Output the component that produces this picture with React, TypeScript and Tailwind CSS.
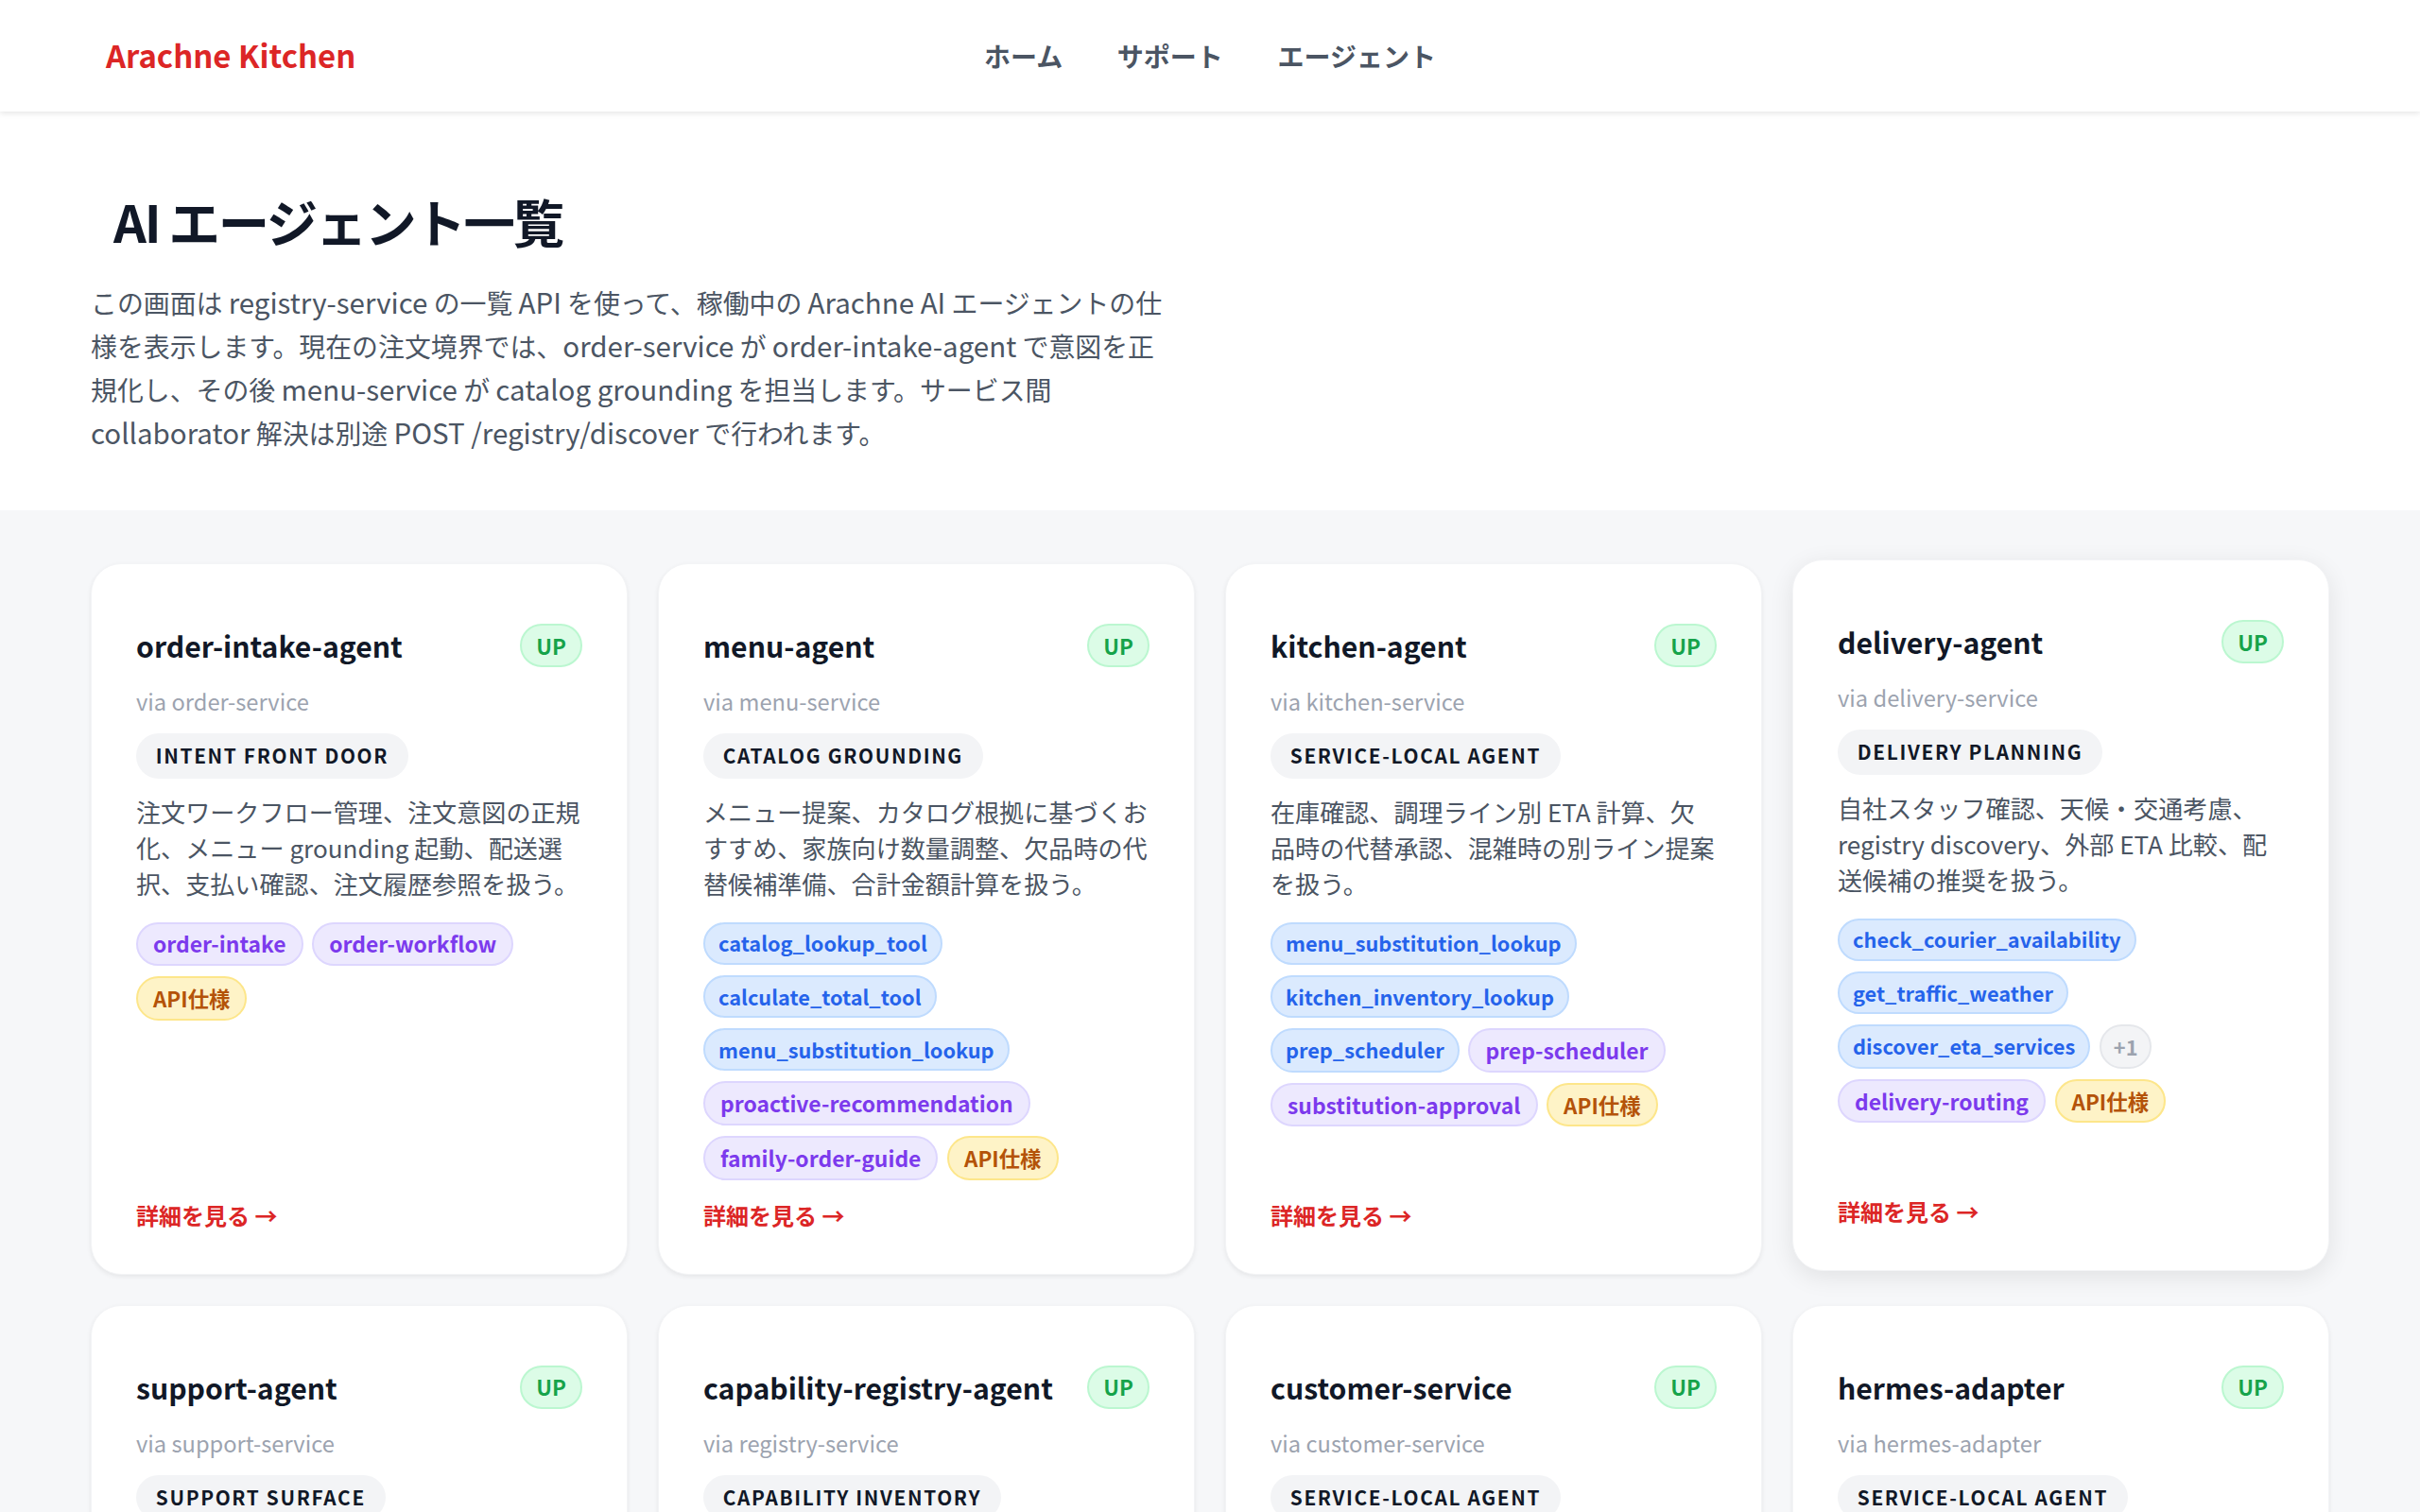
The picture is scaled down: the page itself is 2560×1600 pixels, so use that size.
import type { ReactNode } from 'react';

const tagStyles = {
  tool: 'bg-[#dbeafe] border-[#bfdbfe] text-[#2563eb] px-[14px] text-[21.76px] leading-[31.4px]',
  skill: 'bg-[#ede9fe] border-[#ddd6fe] text-[#7c3aed] px-[16px] text-[22.9px] leading-[33px]',
  api: 'bg-[#fef3c7] border-[#fde68a] text-[#b45309] px-[16px] text-[22.4px] leading-[33px]',
  more: 'bg-[#f3f4f6] border-[#e5e7eb] text-[#9ca3af] px-[13px] text-[21.76px] leading-[33px]',
};

type TagKind = keyof typeof tagStyles;

type Agent = {
  name: string;
  via: string;
  role: string;
  desc: string;
  tags: [TagKind, string][];
  hovered?: boolean;
};

const agents: Agent[] = [
  {
    name: 'order-intake-agent',
    via: 'via order-service',
    role: 'INTENT FRONT DOOR',
    desc: '注文ワークフロー管理、注文意図の正規化、メニュー grounding 起動、配送選択、支払い確認、注文履歴参照を扱う。',
    tags: [['skill', 'order-intake'], ['skill', 'order-workflow'], ['api', 'API仕様']],
  },
  {
    name: 'menu-agent',
    via: 'via menu-service',
    role: 'CATALOG GROUNDING',
    desc: 'メニュー提案、カタログ根拠に基づくおすすめ、家族向け数量調整、欠品時の代替候補準備、合計金額計算を扱う。',
    tags: [
      ['tool', 'catalog_lookup_tool'],
      ['tool', 'calculate_total_tool'],
      ['tool', 'menu_substitution_lookup'],
      ['skill', 'proactive-recommendation'],
      ['skill', 'family-order-guide'],
      ['api', 'API仕様'],
    ],
  },
  {
    name: 'kitchen-agent',
    via: 'via kitchen-service',
    role: 'SERVICE-LOCAL AGENT',
    desc: '在庫確認、調理ライン別 ETA 計算、欠品時の代替承認、混雑時の別ライン提案を扱う。',
    tags: [
      ['tool', 'menu_substitution_lookup'],
      ['tool', 'kitchen_inventory_lookup'],
      ['tool', 'prep_scheduler'],
      ['skill', 'prep-scheduler'],
      ['skill', 'substitution-approval'],
      ['api', 'API仕様'],
    ],
  },
  {
    name: 'delivery-agent',
    via: 'via delivery-service',
    role: 'DELIVERY PLANNING',
    desc: '自社スタッフ確認、天候・交通考慮、registry discovery、外部 ETA 比較、配送候補の推奨を扱う。',
    tags: [
      ['tool', 'check_courier_availability'],
      ['tool', 'get_traffic_weather'],
      ['tool', 'discover_eta_services'],
      ['more', '+1'],
      ['skill', 'delivery-routing'],
      ['api', 'API仕様'],
    ],
    hovered: true,
  },
  {
    name: 'support-agent',
    via: 'via support-service',
    role: 'SUPPORT SURFACE',
    desc: '問い合わせ受付、注文状況の案内、返金やキャンセルの確認を扱う。',
    tags: [['skill', 'support-triage'], ['api', 'API仕様']],
  },
  {
    name: 'capability-registry-agent',
    via: 'via registry-service',
    role: 'CAPABILITY INVENTORY',
    desc: '登録済みエージェントの一覧と能力情報の参照を扱う。',
    tags: [['skill', 'capability-lookup'], ['api', 'API仕様']],
  },
  {
    name: 'customer-service',
    via: 'via customer-service',
    role: 'SERVICE-LOCAL AGENT',
    desc: '顧客情報、注文履歴、アレルギー情報の参照を扱う。',
    tags: [['skill', 'customer-profile'], ['api', 'API仕様']],
  },
  {
    name: 'hermes-adapter',
    via: 'via hermes-adapter',
    role: 'SERVICE-LOCAL AGENT',
    desc: '外部配送サービスとの接続と ETA 取得を扱う。',
    tags: [['tool', 'hermes_eta_lookup'], ['api', 'API仕様']],
  },
];

// latin runs in the intro sit a little larger than the kana/kanji around them
function Latin({ children }: { children: ReactNode }) {
  return <span className="text-[29.5px] leading-[40px]">{children}</span>;
}

function AgentCard({ agent }: { agent: Agent }) {
  return (
    <div
      className={`flex flex-col bg-white rounded-[32px] border border-[#f3f4f6] px-[47px] pt-[63px] pb-[44px] ${
        agent.hovered
          ? '-translate-y-[4px] shadow-[0_6px_26px_rgba(0,0,0,0.09)]'
          : 'shadow-[0_2px_5px_rgba(0,0,0,0.07)]'
      }`}
    >
      <div className="flex items-start justify-between gap-[12px]">
        <h3 className="text-[30.2px] leading-[46px] font-semibold text-[#111827]">{agent.name}</h3>
        <span className="shrink-0 rounded-full border-2 border-[#bbf7d0] bg-[#dcfce7] px-[15px] py-[3.5px] text-[22.4px] leading-[35px] font-semibold text-[#16a34a]">
          UP
        </span>
      </div>
      <p className="mt-[17px] text-[23.68px] leading-[38px] text-[#9ca3af]">{agent.via}</p>
      <div className="mt-[15px]">
        <span className="inline-block rounded-full bg-[#f3f4f6] px-[20.8px] py-[6.4px] text-[20.8px] leading-[35px] font-semibold tracking-[1.65px] text-[#111827]">
          {agent.role}
        </span>
      </div>
      <p className="mt-[17.5px] text-[26.1px] leading-[37.8px] text-[#4b5563]">{agent.desc}</p>
      <div className="mt-[21px] flex flex-wrap gap-x-[9.6px] gap-y-[11.2px]">
        {agent.tags.map(([kind, label]) => (
          <span
            key={kind + label}
            className={`rounded-full border-2 py-[4.8px] font-semibold ${tagStyles[kind]}`}
          >
            {label}
          </span>
        ))}
      </div>
      <a className="mt-auto pt-[19px] text-[24px] leading-[36px] font-bold text-[#dc2626]">詳細を見る →</a>
    </div>
  );
}

export default function App() {
  return (
    <div className="h-screen overflow-hidden bg-[#f6f7f9] font-['Noto_Sans_CJK_JP',sans-serif]">
      {/* Nav */}
      <nav className="relative z-10 flex h-[118px] items-center bg-white px-[112px] shadow-[0_2px_6px_rgba(0,0,0,0.1)]">
        <div className="flex-1 text-[32.9px] font-bold text-[#dc2626] -mt-[2px]">Arachne Kitchen</div>
        <div className="flex gap-[57.6px] text-[28px] font-semibold text-[#4b5563]">
          <span>ホーム</span>
          <span>サポート</span>
          <span>エージェント</span>
        </div>
        <div className="flex-1" />
      </nav>

      {/* Header */}
      <header className="h-[422px] bg-white px-[96px] pt-[76px]">
        <h1 className="pl-[24px] text-[54.4px] leading-[80px] font-bold tracking-[-2.2px] text-[#111827]">AI エージェント一覧</h1>
        <p className="mt-[22.5px] max-w-[1140px] text-[27.9px] leading-[46px] text-[#4b5563]">
          この画面は <Latin>registry-service</Latin> の一覧 <Latin>API</Latin> を使って、稼働中の <Latin>Arachne AI</Latin> エージェントの仕様を表示します。現在の注文境界では、<Latin>order-service</Latin> が <Latin>order-intake-agent</Latin> で意図を正規化し、その後 <Latin>menu-service</Latin> が <Latin>catalog grounding</Latin> を担当します。サービス間 <Latin>collaborator</Latin> 解決は別途 <Latin>POST /registry/discover</Latin> で行われます。
        </p>
      </header>

      {/* Agent cards */}
      <main className="grid grid-cols-4 gap-[32px] px-[96px] pt-[56px]">
        {agents.map((agent) => (
          <AgentCard key={agent.name} agent={agent} />
        ))}
      </main>
    </div>
  );
}
